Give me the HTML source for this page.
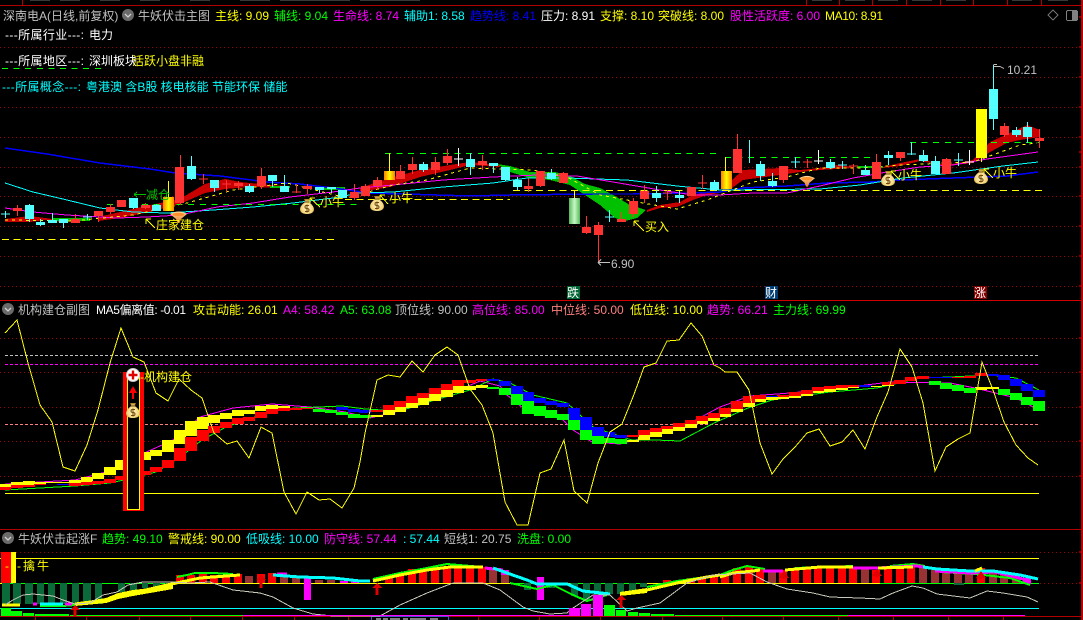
<!DOCTYPE html>
<html><head><meta charset="utf-8"><style>
html,body{margin:0;padding:0;background:#000;width:1083px;height:620px;overflow:hidden}
svg{display:block;position:absolute;left:0;top:0}
text{font-family:"Liberation Sans","WenQuanYi Zen Hei","Noto Sans CJK SC",sans-serif;font-size:12px;shape-rendering:auto}
.g{shape-rendering:crispEdges}
</style></head><body>
<svg width="1083" height="620" viewBox="0 0 1083 620" xmlns="http://www.w3.org/2000/svg">
<defs>
<radialGradient id="bag" cx=".5" cy=".6" r=".6"><stop offset="0" stop-color="#fff6cc"/><stop offset=".7" stop-color="#f4d47a"/><stop offset="1" stop-color="#a87818"/></radialGradient>
<linearGradient id="og" x1="0" x2="1" y1="0" y2="0"><stop offset="0" stop-color="#ff8000"/><stop offset=".5" stop-color="#ffff00"/><stop offset="1" stop-color="#ff8000"/></linearGradient>
<linearGradient id="gg" x1="0" x2="1" y1="0" y2="0"><stop offset="0" stop-color="#58b858"/><stop offset=".5" stop-color="#c8f8c8"/><stop offset="1" stop-color="#58b858"/></linearGradient>
<linearGradient id="fun" x1="0" x2="0" y1="0" y2="1"><stop offset="0" stop-color="#ffd8a0"/><stop offset="1" stop-color="#e87820"/></linearGradient>
<symbol id="b" viewBox="0 0 14 16" overflow="visible"><path d="M4 1h6l-1.500 3C12 6 14 9 14 11.500 14 15 10 16 7 16S0 15 0 11.500C0 9 2 6 5.500 4z" fill="url(#bag)"/><path d="M4.500 4h5" stroke="#704808" stroke-width="1"/><path d="M9 7.500H6.200Q5 7.500 5 9t2 1.500 2 1.500-1.200 1.500H5M7 6.500v8" fill="none" stroke="#704808" stroke-width="1"/></symbol>
<symbol id="d" viewBox="0 0 17 12" overflow="visible"><path d="M0 3Q8.500-2 17 3L11 8 9.500 12h-2L6 8z" fill="url(#fun)"/><ellipse cx="8.500" cy="3.500" rx="6" ry="1.800" fill="#ff9030"/></symbol>
</defs>
<g class="g">
<!-- frame -->
<path d="M0 5.500H1083M0 529.500H1083M0 616.500H1083" stroke="#b00000" stroke-width="1" fill="none"/>
<path d="M0 300.500H1083" stroke="#d00000"/>
<rect x="1081" y="0" width="2" height="620" fill="#c00000"/>
<path d="M22.500 0V5M806.500 0V5M839.500 0V5M872.500 0V5M906.500 0V5M940.500 0V5M973.500 0V5M1007.500 0V5M1041.500 0V5" stroke="#b00000"/>
<path d="M812 0h20M845 0h20M878 0h20M912 0h20M946 0h20M1012 0h20M1048 0h20M30 0h20M60 0h20M100 0h20M140 0h20M190 0h20M240 0h30M280 0h70M360 0h60" stroke="#707070"/>
<path d="M1079 17h2M1079 47h2M1079 77h2M1079 107h2M1079 137h2M1079 152h2M1079 167h2M1079 196h2M1079 226h2M1079 256h2M1079 286h2M1079 338h2M1079 372h2M1079 407h2M1079 441h2M1079 476h2M1079 552h2M1079 583h2" stroke="#ff0000"/>
<path d="M35.500 616V620M86.500 616V620M139.500 616V620M190.500 616V620M242.500 616V620M294.500 616V620M348.500 616V620M478.500 616V620M539.500 616V620M600.500 616V620M662.500 616V620M722.500 616V620M783.500 616V620M838.500 616V620M893.500 616V620M948.500 616V620M1003.500 616V620" stroke="#b00000"/>
<rect x="371.500" y="616.500" width="77" height="5" fill="#000" stroke="#5050d0"/>
<path d="M376 619h5M383 619h5M390 619h10M403 619h5M410 619h16M430 619h8" stroke="#ffffff"/>
<!-- grid -->
<path d="M0 47.500H1079M0 77.500H1079M0 107.500H1079M0 137.500H1079M0 167.500H1079M0 196.500H1079M0 226.500H1079M0 256.500H1079M0 286.500H1079M0 338.500H1079M0 372.500H1079M0 407.500H1079M0 441.500H1079M0 476.500H1079M0 552.500H1079M1040 583.500H1079" stroke="#a00000" stroke-dasharray="1 3" fill="none"/>
<!-- ribbons -->
<path d="M5 219L30 216 45 218 60 220V222L45 220 30 222 5 222z M98 217L120 212 150 205 180 199 205 184 225 179 240 182 270 185 290 186V188L250 187 225 189 205 193 180 204 150 212 120 218 98 221z M360 188L390 178 420 170 450 165 470 162 500 165V167L470 165 450 170 420 177 390 187 360 192z M647 210L660 205 680 202 693 195 707 192 720 192 732 180 743 170 780 168 800 170 820 168 837 165 853 167 853 168 820 170 800 172 780 175 743 180 732 188 720 193 707 195 693 200 677 207 660 208 647 212z M883 167L900 163 920 159 937 163 947 165 973 160 990 142 1010 133 1027 125 1040 130V137L1020 140 1007 143 990 152 973 163 947 166 920 161 900 166 883 168z" fill="#c80000"/>
<path d="M52 218H90V221H52z M318 187H345V190H318z M497 164L510 166 530 172 555 172 570 176 585 184 600 188 615 196 630 205 646 210 637 218 625 221 615 218 600 205 585 195 570 185 550 180 530 178 510 172z M857 166H883V168H857z M270 186H290V188H270z" fill="#00c000"/>
<!-- MA lines -->
<polyline points="5,148 47,154 100,163 150,169 175,173 220,176 267,182 300,184 333,188 370,193 470,196 510,195 593,194 633,194 693,193 720,192 743,188 787,186 827,183 870,182 900,180 953,178 1007,176 1038,172" fill="none" stroke="#0000ff" stroke-width="1.500"/>
<polyline points="5,183 33,192 67,200 100,208 133,212 167,213 213,210 253,207 293,203 333,198 360,193 393,192 443,187 493,183 527,178 567,178 627,180 677,186 720,190 820,189 860,185 903,178 953,173 1003,166 1038,162" fill="none" stroke="#00ffff" stroke-width="1"/>
<polyline points="5,208 33,212 67,215 117,218 147,217 180,215 217,207 253,203 290,197 333,192 360,188 393,185 443,180 493,177 537,175 577,176 613,182 660,190 693,195 720,195 753,193 787,193 820,186 853,178 887,172 920,167 953,165 987,159 1038,152" fill="none" stroke="#ff00ff" stroke-width="1"/>
<polyline points="5,220 73,221 133,215 187,203 233,190 287,183 347,198 393,185 427,180 470,168 533,170 567,177 600,195 643,203 677,209 707,200 753,182 787,177 820,168 860,168 900,165 947,163 973,162 987,157 1020,145 1037,143" fill="none" stroke="#ffff00" stroke-dasharray="3 4"/>
<path d="M2 239.500H334M345 199.500H510M513 190.500H1043" stroke="#ffff00" stroke-dasharray="7 4.600" fill="none"/>
<path d="M107 204.500H360M385 153.500H720M725 157.500H870M910 142.500H1040M2 68.500H102" stroke="#00ff00" stroke-dasharray="6 5.600" fill="none"/>
<!-- wicks red -->
<path d="M17.500 205V216M75.500 214V223M98.500 211V222M110.500 204V214M145.500 203V209M180.500 155V205M238.500 181V190M261.500 168V189M307.500 184V194M354.500 184V200M365.500 184V196M377.500 177V190M400.500 165V179M412.500 157V174M435.500 157V175M447.500 149V165M482.500 155V170M528.500 178V192M540.500 171V187M563.500 172V183M586.500 216V234M598.500 222V262M621.500 212V222M633.500 198V217M644.500 185V203M691.500 187V196M737.500 134V173M783.500 166V183M876.500 154V179M900.500 152V161M946.500 158V174M1004.500 123V137M1039.500 129V148M203.500 174V184M226.500 180V192M296.500 184V193M667.500 190V200M702.500 175V189M807.500 159V168M853.500 164V174" stroke="#ff3232" fill="none"/>
<path d="M199 179h9M222 184h9M292 192h9M663 193h9M698 183h9M803 162h9M849 166h9" stroke="#ff3232"/>
<!-- red bodies -->
<path fill="#ff3232" d="M13 208h9V211h-9zM71 219h9V223h-9zM94 211h9V216h-9zM106 207h9V212h-9zM117 200h9V207h-9zM141 205h9V208h-9zM175 167h9V203h-9zM234 183h9V186h-9zM257 176h9V186h-9zM303 186h9V189h-9zM350 192h9V198h-9zM361 186h9V196h-9zM373 180h9V186h-9zM396 171h9V179h-9zM408 164h9V170h-9zM431 162h9V170h-9zM443 156h9V163h-9zM478 161h9V165h-9zM524 186h9V189h-9zM536 171h9V186h-9zM559 173h9V183h-9zM582 227h9V233h-9zM594 225h9V235h-9zM617 219h9V222h-9zM629 201h9V214h-9zM640 191h9V199h-9zM687 187h9V196h-9zM733 149h9V173h-9zM779 166h9V180h-9zM872 162h9V179h-9zM896 152h9V158h-9zM942 159h9V174h-9zM1000 126h9V135h-9zM1035 138h9V141h-9z"/>
<!-- wicks cyan -->
<path d="M5.500 211V218M29.500 204V222M40.500 219V226M52.500 213V223M63.500 219V228M87.500 214V220M133.500 198V209M156.500 204V211M191.500 156V180M214.500 180V192M249.500 184V193M272.500 175V187M284.500 175V192M319.500 187V193M331.500 187V193M342.500 190V198M423.500 162V172M470.500 153V175M493.500 163V173M505.500 167V181M517.500 177V190M551.500 169V180M609.500 210V222M656.500 186V202M679.500 191V203M714.500 180V191M749.500 140V163M760.500 161V181M772.500 173V187M795.500 157V168M830.500 159V169M842.500 161V169M865.500 165V175M888.500 151V165M911.500 142V155M923.500 150V162M935.500 156V174M958.500 153V166M993.500 65V130M1016.500 127V137M1027.500 122V143" stroke="#54ffff" fill="none"/>
<path d="M1 214h9M83 217h9M605 217h9M791 162h9M838 165h9M907 154h9M954 160h9" stroke="#54ffff"/>
<path fill="#54ffff" d="M25 205h9V219h-9zM36 222h9V225h-9zM48 220h9V223h-9zM59 219h9V223h-9zM129 198h9V208h-9zM152 205h9V211h-9zM187 166h9V179h-9zM210 180h9V188h-9zM245 186h9V192h-9zM268 175h9V181h-9zM280 186h9V192h-9zM315 187h9V190h-9zM327 187h9V189h-9zM338 190h9V198h-9zM419 164h9V170h-9zM466 159h9V167h-9zM489 163h9V166h-9zM501 167h9V180h-9zM513 180h9V187h-9zM547 173h9V179h-9zM652 193h9V198h-9zM675 195h9V198h-9zM710 182h9V190h-9zM756 164h9V176h-9zM768 181h9V186h-9zM826 162h9V168h-9zM861 170h9V175h-9zM884 155h9V158h-9zM919 155h9V161h-9zM931 161h9V174h-9zM989 89h9V119h-9zM1012 130h9V135h-9zM1023 127h9V137h-9z"/>
<!-- white crosses -->
<path d="M458.500 148V166M454 159h9M818.500 150V164M814 161h9M969.500 150V165M965 162h9" stroke="#fff" fill="none"/>
<!-- special candles -->
<path d="M168.500 181V197M389.500 153V171M725.500 157V171M574.500 191V198M981.500 158V162" stroke="#ffff00" fill="none"/>
<rect x="163" y="197" width="11" height="14" fill="url(#og)"/>
<rect x="384" y="171" width="11" height="9" fill="url(#og)"/>
<rect x="721" y="171" width="11" height="18" fill="url(#og)"/>
<rect x="569" y="198" width="11" height="26" fill="url(#gg)"/>
<rect x="976" y="109" width="11" height="49" fill="#ffff00"/>
<!-- extreme markers -->
<path d="M993.500 64.500H997M993.500 66.500H1000L1004 68.500M598 262.500H610M598 262.500L601 259.500M598 262.500L601 265.500" stroke="#c0c0c0" fill="none"/>
<path d="M134 194.500H146M134 194.500L137 192M134 194.500L137 197" stroke="#00c000" fill="none"/>
<path d="M146 219L155 228M146 219H151M146 219V224" stroke="#ffff00" fill="none"/>
<path d="M634 221L644 231M634 221H639M634 221V226" stroke="#ffff00" fill="none"/>
<path d="M310 198L320 207M310 198H315M310 198V203M380 195L388 204M380 195H385M380 195V200M891 171L900 180M891 171H896M891 171V176M984 169L993 178M984 169H989M984 169V174" stroke="#ffff00" fill="none"/>
<!-- Panel 2 -->
<path d="M5 355.500H1039" stroke="#c0c0c0" stroke-dasharray="3 2"/>
<path d="M5 364.500H1039" stroke="#ff00ff" stroke-dasharray="3 2"/>
<path d="M5 424.500H1039" stroke="#ff8080" stroke-dasharray="3 2"/>
<path d="M5 493.500H1039" stroke="#ffff00"/>
<polyline points="5,484 75,480 110,471 140,455 173,440 200,417 233,408 272,404 310,407 345,412 370,418 395,412 440,398 480,381 500,386 507,395 523,408 560,417 573,430 592,442 620,444 650,436 690,423 720,407 750,396 790,393 850,387 890,382 950,383 975,388 1016,398 1039,410" fill="none" stroke="#ff00ff"/>
<polyline points="5,490 75,486 110,483 133,478 156,472 179,458 202,440 226,427 249,419 272,411 295,408 319,407 342,406 365,409 400,411 435,400 470,390 493,379 510,383 533,395 567,403 593,427 610,433 632,440 655,440 680,441 714,423 748,408 772,400 830,392 877,388 920,378 950,377 990,375 1016,378 1039,390" fill="none" stroke="#00ff00"/>
<path fill="#ffff00" d="M-1 484h12V487H-1zM11 482h12V485H11zM23 481h12V485H23zM34 482h12V484H34zM46 482h12V483H46zM57 482h12V483H57zM69 480h12V483H69zM81 477h12V482H81zM92 473h12V479H92zM104 467h12V475H104zM115 460h12V470H115zM139 452h12V460H139zM150 450h12V456H150zM162 440h12V452H162zM174 430h12V444H174zM185 421h12V436H185zM197 417h12V429H197zM208 415h12V423H208zM220 413h12V419H220zM232 410h12V416H232zM243 410h12V414H243zM255 406h12V411H255zM266 405h12V409H266zM278 406h12V408H278zM371 415h12V417H371zM383 410h12V415H383zM394 407h12V412H394zM406 403h12V408H406zM417 398h12V405H417zM429 394h12V401H429zM441 390h12V397H441zM452 386h12V393H452zM464 386h12V390H464zM476 385h12V388H476zM627 440h12V442H627zM638 435h12V440H638zM650 432h12V437H650zM661 429h12V434H661zM673 427h12V431H673zM685 424h12V428H685zM696 421h12V424H696zM708 418h12V421H708zM719 414h12V417H719zM731 409h12V412H731zM743 403h12V407H743zM754 399h12V402H754zM766 397h12V400H766zM777 397h12V399H777zM789 396h12V398H789zM801 394h12V396H801zM812 391h12V393H812zM824 389h12V392H824zM836 388h12V390H836zM847 387h12V388H847zM870 386h12V387H870zM882 385h12V386H882zM975 387h12V390H975zM987 387h12V389H987z"/>
<path fill="#ff0000" d="M-1 487h12V490H-1zM11 485h12V488H11zM23 485h12V487H23zM34 484h12V485H34zM69 483h12V486H69zM81 482h12V485H81zM92 481h12V484H92zM104 479h12V483H104zM115 476h12V480H115zM127 472h12V476H127zM139 471h12V475H139zM150 467h12V472H150zM162 460h12V468H162zM174 448h12V461H174zM185 437h12V451H185zM197 430h12V441H197zM208 426h12V433H208zM220 422h12V428H220zM232 418h12V424H232zM243 417h12V421H243zM255 412h12V418H255zM266 409h12V414H266zM278 408h12V411H278zM290 408h12V410H290zM301 408h12V409H301zM371 410h12V412H371zM383 405h12V410H383zM394 401h12V407H394zM406 396h12V403H406zM417 393h12V398H417zM429 388h12V394H429zM441 384h12V390H441zM452 380h12V386H452zM464 380h12V383H464zM476 379h12V381H476zM627 435h12V437H627zM638 430h12V435H638zM650 428h12V432H650zM661 426h12V429H661zM673 423h12V427H673zM685 420h12V424H685zM696 416h12V421H696zM708 413h12V418H708zM719 408h12V414H719zM731 401h12V409H731zM743 396h12V403H743zM754 395h12V399H754zM777 395h12V397H777zM789 392h12V396H789zM801 390h12V394H801zM812 387h12V391H812zM824 386h12V389H824zM836 385h12V388H836zM847 385h12V387H847zM882 382h12V385H882zM894 380h12V384H894zM905 377h12V381H905zM917 376h12V379H917zM952 377h12V378H952zM964 376h12V378H964zM975 373h12V376H975z"/>
<path fill="#0000ff" d="M57 484h12V485H57zM336 407h12V410H336zM348 409h12V412H348zM359 410h12V413H359zM487 379h12V381H487zM499 381h12V386H499zM511 386h12V394H511zM522 392h12V401H522zM534 398h12V403H534zM545 401h12V405H545zM557 403h12V407H557zM568 408h12V420H568zM580 417h12V430H580zM592 427h12V436H592zM603 432h12V437H603zM615 435h12V438H615zM766 396h12V397H766zM859 385h12V387H859zM929 377h12V378H929zM940 377h12V378H940zM987 374h12V376H987zM998 375h12V380H998zM1010 379h12V386H1010zM1021 384h12V391H1021zM1033 390h12V397H1033z"/>
<path fill="#00ff00" d="M313 409h12V412H313zM325 410h12V413H325zM336 412h12V415H336zM348 414h12V418H348zM359 415h12V418H359zM487 387h12V389H487zM499 388h12V395H499zM511 394h12V405H511zM522 401h12V414H522zM534 406h12V416H534zM545 410h12V418H545zM557 414h12V420H557zM568 420h12V430H568zM580 430h12V440H580zM592 436h12V444H592zM603 438h12V443H603zM615 439h12V444H615zM929 381h12V385H929zM940 383h12V389H940zM952 385h12V391H952zM964 388h12V393H964zM998 389h12V395H998zM1010 393h12V400H1010zM1021 397h12V405H1021zM1033 401h12V411H1033z"/>
<polyline fill="none" stroke="#ffff00" stroke-width="1" points="5,333 17,320 28,363 40,405 52,422 63,467 75,471 87,445 98,410 110,363 121,328 133,357 144,362 156,393 168,401 179,379 191,390 202,398 214,433 227,444 237,441 249,458 261,427 272,433 284,492 296,514 307,492 319,500 330,499 342,508 354,488 360,462 365,433 377,380 388,375 400,377 412,361 423,372 435,355 447,347 458,355 470,389 482,405 493,433 505,502 517,525 528,525 540,473 551,469 564,440 574,491 587,503 598,463 610,432 622,424 633,397 644,367 656,363 667,341 679,340 691,323 702,336 714,365 720,368 725,372 737,372 749,390 760,443 772,474 783,459 795,447 807,433 819,429 830,446 842,442 853,430 865,449 877,417 888,392 900,349 912,367 923,403 935,471 946,447 958,439 970,433 982,362 993,390 1004,422 1016,445 1028,458 1038,465"/>
<!-- box -->
<rect x="123" y="372" width="21" height="139" fill="#ff0000"/>
<rect x="127" y="372" width="13" height="138" fill="#000"/>
<rect x="127.500" y="372.500" width="12" height="137" fill="none" stroke="#ffff00"/>
<path d="M133 393V399" stroke="#ff0000" stroke-width="2"/>
<path d="M133 386L129 393H137z" fill="#ff0000"/>
</g>
<circle cx="133" cy="375" r="6.500" fill="#fff" stroke="#c8c8c8"/>
<path d="M133 370.500v9M128.500 375h9" stroke="#e00000" stroke-width="2.400"/>
<use href="#b" x="126" y="402" width="14" height="16"/>
<g class="g">
<!-- Panel 3 -->
<path d="M0 558.500H1039" stroke="#ffff00"/>
<path d="M0 608.500H1039" stroke="#00ffff"/>
<path d="M0 583.500H880" stroke="#ffff00"/>
<path d="M5 583.500H180M512 583.500H540M570 583.500H640M880 583.500H1039" stroke="#00ff00"/>
<rect x="1" y="552" width="10" height="31" fill="#ff0000"/>
<rect x="11" y="552" width="5" height="31" fill="#ffff00"/>
<path fill="#0a6a3a" d="M2 583h8V604H2zM13 583h8V604H13zM25 583h8V604H25zM37 583h7V604H37zM48 583h7V604H48zM60 583h7V604H60zM72 583h7V604H72zM83 583h8V604H83zM95 583h7V604H95zM118 583h7V592H118zM130 583h7V590H130zM142 583h6V588H142zM153 583h7V588H153zM165 583h7V585H165zM524 583h7V590H524zM547 583h8V588H547zM571 583h7V596H571zM583 583h7V601H583zM594 583h7V594H594zM605 583h8V594H605zM617 583h7V594H617zM629 583h7V594H629zM640 583h7V587H640zM954 583h10V585H954z"/>
<path fill="#ff0000" d="M176 575h8V583H176zM187 575h8V583H187zM199 573h8V583H199zM210 575h8V583H210zM222 577h8V583H222zM234 574h8V583H234zM257 574h8V583H257zM268 573h8V583H268zM385 575h8V583H385zM396 573h8V583H396zM408 569h8V583H408zM419 569h8V583H419zM431 567h8V583H431zM443 566h8V583H443zM454 567h8V583H454zM466 567h8V583H466zM478 567h8V583H478zM663 580h8V583H663zM675 581h8V583H675zM687 578h8V583H687zM698 578h8V583H698zM710 577h8V583H710zM721 573h8V583H721zM733 568h8V583H733zM745 567h8V583H745zM756 568h8V583H756zM779 570h8V583H779zM791 570h8V583H791zM803 568h8V583H803zM814 568h8V583H814zM826 568h8V583H826zM838 568h8V583H838zM849 568h8V583H849zM872 570h8V583H872zM884 568h8V583H884zM896 566h8V583H896zM907 564h8V583H907zM977 568h8V583H977z"/>
<path fill="#993333" d="M245 576h8V583H245zM280 577h8V583H280zM292 578h8V583H292zM315 580h8V583H315zM327 580h8V583H327zM489 568h8V583H489zM501 575h8V583H501zM768 572h8V583H768zM861 568h8V583H861zM919 567h8V583H919zM931 570h8V583H931zM942 572h8V583H942zM954 573h8V583H954zM965 573h8V583H965zM989 570h8V583H989zM1000 573h8V583H1000zM1012 577h8V583H1012zM1023 578h8V583H1023z"/>
<path fill="#ff00ff" d="M304 577h7V600H304zM537 577h7V600H537zM501 570h8V575H501zM1023 578h8V584H1023zM340 581h8V583H340zM351 581h8V583H351z"/>
<path fill="#ffff00" d="M75 603L106 598 118 593 133 590 150 588 173 585V589L150 593 133 596 118 599 106 603 75 606zM620 592L647 588V593L620 596z"/>
<polyline points="177,577 187,575 195,573 213,573 233,574" fill="none" stroke="#00ff00" stroke-width="2"/>
<polyline points="40,606 63,606 75,605" fill="none" stroke="#00ff00" stroke-width="2"/>
<polyline points="373,579 400,573 427,568 447,564 483,567" fill="none" stroke="#00ff00" stroke-width="2"/>
<polyline points="510,583 537,589 553,585 573,595 587,601 607,595" fill="none" stroke="#00ff00" stroke-width="2"/>
<polyline points="647,587 677,581 720,575 733,570 747,566 765,569" fill="none" stroke="#00ff00" stroke-width="2"/>
<polyline points="795,568 853,566" fill="none" stroke="#00ff00" stroke-width="2"/>
<polyline points="890,566 913,564 925,566" fill="none" stroke="#00ff00" stroke-width="2"/>
<polyline points="940,572 975,574 1010,578 1030,585" fill="none" stroke="#00ff00" stroke-width="2"/>
<polyline points="33,604 37,604" fill="none" stroke="#ff00ff" stroke-width="3"/>
<polyline points="65,604 72,604" fill="none" stroke="#ff00ff" stroke-width="3"/>
<polyline points="277,574 287,574" fill="none" stroke="#ff00ff" stroke-width="3"/>
<polyline points="485,568 503,570" fill="none" stroke="#ff00ff" stroke-width="3"/>
<polyline points="763,571 783,571" fill="none" stroke="#ff00ff" stroke-width="3"/>
<polyline points="853,568 877,568 917,566 923,567" fill="none" stroke="#ff00ff" stroke-width="3"/>
<polyline points="935,571 970,573 995,572 1027,580" fill="none" stroke="#ff00ff" stroke-width="3"/>
<polyline points="40,604 63,604" fill="none" stroke="#00ffff" stroke-width="3"/>
<polyline points="273,575 300,577 333,578 360,581 370,581" fill="none" stroke="#00ffff" stroke-width="3"/>
<polyline points="493,568 507,573 527,580 537,584 567,584 583,591 610,594" fill="none" stroke="#00ffff" stroke-width="3"/>
<polyline points="923,567 937,569 970,571 993,571 1020,575 1038,579" fill="none" stroke="#00ffff" stroke-width="3"/>
<polyline points="2,605 20,605" fill="none" stroke="#ffff00" stroke-width="3"/>
<polyline points="75,604 106,600 133,593 167,585 200,578 240,575" fill="none" stroke="#ffff00" stroke-width="3"/>
<polyline points="373,581 400,575 427,570 450,567 483,567" fill="none" stroke="#ffff00" stroke-width="3"/>
<polyline points="620,594 647,590 677,583 707,577 720,575" fill="none" stroke="#ffff00" stroke-width="3"/>
<polyline points="720,577 733,573 753,571 760,570" fill="none" stroke="#ffff00" stroke-width="3"/>
<polyline points="785,570 820,567 853,567" fill="none" stroke="#ffff00" stroke-width="3"/>
<polyline points="878,568 913,567" fill="none" stroke="#ffff00" stroke-width="3"/>
<polyline points="975,571 982,568" fill="none" stroke="#ffff00" stroke-width="3"/>
<polyline points="5,605 13,600 23,595 33,594 53,596 63,600 75,604 90,603 103,595 117,592 128,585 143,582 170,582 190,583 210,582 233,590 260,593 273,597 293,608 313,614 333,616 380,616 400,605 427,593 453,583 483,583 500,590 523,607 533,611 550,614 567,613 573,608 593,595 610,595 627,611 637,608 660,603 687,583 713,575 750,573 767,582 787,589 813,593 830,597 860,598 880,599 893,593 912,586 923,588 937,594 970,598 987,591 1003,593 1027,597 1038,602" fill="none" stroke="#c8c8b8"/>
<!-- bottom bars -->
<path fill="#00ff00" d="M1 608h10V616H1zM11 611h11V616H11zM23 613h11V616H23zM35 614h22V616H35zM57 614h12V616H57zM70 615h173V616H70zM604 605h11V616H604zM616 610h10V616H616zM628 612h10V616H628zM639 613h11V616H639zM651 614h23V616H651zM675 615h173V616H675z"/>
<path fill="#ff00ff" d="M243 615h330V616H243zM569 608h11V616H569zM581 604h10V616H581zM593 595h10V616H593zM848 615h177V616H848z"/>
<!-- up arrows -->
<path fill="#e00000" d="M75 605L70 610H73.500V616H76.500V610H80zM261 575L256 580H259.500V588H262.500V580H266zM377 583L372 588H375.500V595H378.500V588H382zM621 595L616 600H619.500V608H622.500V600H626zM784 571L779 578H782.500V579H785.500V578H789zM877 569L872 576H875.500V577H878.500V576H882zM981 571L976 578H979.500V579H982.500V578H986z"/>
<!-- badges -->
<rect x="567" y="286" width="13" height="13" fill="#006633"/>
<rect x="765" y="286" width="13" height="13" fill="#003d73"/>
<rect x="974" y="286" width="13" height="13" fill="#800000"/>
<path d="M1053 10L1058 15 1053 20 1048 15z" fill="none" stroke="#707070"/>
<rect x="1066.500" y="10.500" width="11" height="10" rx="1.500" fill="none" stroke="#808080"/>
<rect x="1072" y="11" width="5" height="9" fill="#808080"/>
</g>
<!-- circular icons -->
<g fill="#6a6a6a"><circle cx="128" cy="15" r="6"/><circle cx="8" cy="309" r="6"/><circle cx="8" cy="538" r="6"/></g>
<path d="M125 14l3 3 3-3M5 308l3 3 3-3M5 537l3 3 3-3" fill="none" stroke="#d0d0d0" stroke-width="1.300"/>
<!-- icons -->
<use href="#b" x="300" y="198" width="14" height="16"/>
<use href="#b" x="370" y="195" width="14" height="16"/>
<use href="#b" x="881" y="170" width="14" height="16"/>
<use href="#b" x="974" y="168" width="14" height="16"/>
<use href="#d" x="170" y="211" width="17" height="12"/>
<use href="#d" x="799" y="175" width="16" height="12"/>
<!-- header 1 -->
<text x="3" y="20" fill="#c0c0c0">深南电A(日线,前复权)</text>
<text x="138" y="20" fill="#c0c0c0">牛妖伏击主图</text>
<text x="215" y="20" fill="#ffff00">主线: 9.09</text>
<text x="274" y="20" fill="#00ff00">辅线: 9.04</text>
<text x="333" y="20" fill="#ff00ff">生命线: 8.74</text>
<text x="404" y="20" fill="#00ffff">辅助1: 8.58</text>
<text x="470" y="20" fill="#0000ff">趋势线: 8.41</text>
<text x="541" y="20" fill="#ffffff">压力: 8.91</text>
<text x="600" y="20" fill="#ffff00">支撑: 8.10</text>
<text x="658" y="20" fill="#ffff00">突破线: 8.00</text>
<text x="730" y="20" fill="#ff00ff">股性活跃度: 6.00</text>
<text x="825" y="20" fill="#ffff00" textLength="58">MA10: 8.91</text>
<!-- info -->
<text x="5" y="39" fill="#ffffff" textLength="79">---所属行业---:</text>
<text x="89" y="39" fill="#ffffff">电力</text>
<text x="5" y="65" fill="#ffffff" textLength="79">---所属地区---:</text>
<text x="89" y="65" fill="#ffffff">深圳板块</text>
<text x="132" y="65" fill="#ffff00">活跃小盘非融</text>
<text x="2" y="91" fill="#00ffff" textLength="79">---所属概念---:</text>
<text x="86" y="91" fill="#00ffff">粤港澳 含B股 核电核能 节能环保 储能</text>
<!-- annotations -->
<text x="1007" y="74" fill="#c0c0c0">10.21</text>
<text x="611" y="268" fill="#c0c0c0">6.90</text>
<text x="146" y="199" fill="#00c000">减仓</text>
<text x="156" y="229" fill="#ffff00">庄家建仓</text>
<text x="645" y="231" fill="#ffff00">买入</text>
<text x="320" y="206" fill="#ffff00" font-size="14">小牛</text>
<text x="389" y="202" fill="#ffff00">小牛</text>
<text x="898" y="179" fill="#ffff00">小牛</text>
<text x="993" y="177" fill="#ffff00">小牛</text>
<text x="567" y="297" fill="#ffffff">跌</text>
<text x="765" y="297" fill="#ffffff">财</text>
<text x="974" y="297" fill="#ffffff">涨</text>
<!-- header 2 -->
<text x="18" y="314" fill="#c0c0c0">机构建仓副图</text>
<text x="96" y="314" fill="#ffffff" textLength="90">MA5偏离值: -0.01</text>
<text x="193" y="314" fill="#ffff00">攻击动能: 26.01</text>
<text x="283" y="314" fill="#ff00ff">A4: 58.42</text>
<text x="340" y="314" fill="#00ff00">A5: 63.08</text>
<text x="395" y="314" fill="#c0c0c0">顶位线: 90.00</text>
<text x="472" y="314" fill="#ff00ff">高位线: 85.00</text>
<text x="551" y="314" fill="#ff8080">中位线: 50.00</text>
<text x="630" y="314" fill="#ffff00">低位线: 10.00</text>
<text x="707" y="314" fill="#ff00ff">趋势: 66.21</text>
<text x="773" y="314" fill="#00ff00">主力线: 69.99</text>
<text x="140" y="381" fill="#ffff00">-机构建仓</text>
<!-- header 3 -->
<text x="18" y="543" fill="#c0c0c0">牛妖伏击起涨F</text>
<text x="102" y="543" fill="#00ff00">趋势: 49.10</text>
<text x="168" y="543" fill="#ffff00">警戒线: 90.00</text>
<text x="246" y="543" fill="#00ffff">低吸线: 10.00</text>
<text x="324" y="543" fill="#ff00ff">防守线: 57.44</text>
<text x="403" y="543" fill="#00ffff">: 57.44</text>
<text x="444" y="543" fill="#c0c0c0">短线1: 20.75</text>
<text x="517" y="543" fill="#00ff00">洗盘: 0.00</text>
<text x="5" y="570" fill="#ffff00" textLength="44">---擒牛</text>
</svg>
</body></html>
